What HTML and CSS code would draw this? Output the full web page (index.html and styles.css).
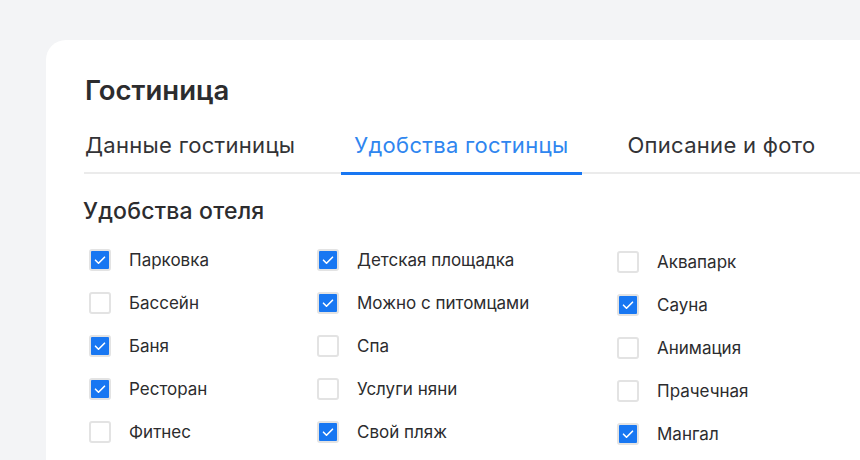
FILE: index.html
```html
<!DOCTYPE html>
<html lang="ru">
<head>
    <meta charset="UTF-8">
    <meta name="viewport" content="width=device-width, initial-scale=1.0">
    <title>Гостиница</title>
    <link rel="stylesheet" href="styles.css">
</head>
<body>
    <div class="card">
        <h1 class="card-title">Гостиница</h1>

        <div class="tabs">
            <div class="tab-list">
                <div class="tab">Данные гостиницы</div>
                <div class="tab tab-active">Удобства гостинцы</div>
                <div class="tab">Описание и фото</div>
            </div>
        </div>

        <h2 class="section-title">Удобства отеля</h2>

        <div class="amenities">
            <div class="amenity-col col-1">
                <label class="amenity"><span class="box checked"></span>Парковка</label>
                <label class="amenity"><span class="box"></span>Бассейн</label>
                <label class="amenity"><span class="box checked"></span>Баня</label>
                <label class="amenity"><span class="box checked"></span>Ресторан</label>
                <label class="amenity"><span class="box"></span>Фитнес</label>
            </div>
            <div class="amenity-col col-2">
                <label class="amenity"><span class="box checked"></span>Детская площадка</label>
                <label class="amenity"><span class="box checked"></span>Можно с питомцами</label>
                <label class="amenity"><span class="box"></span>Спа</label>
                <label class="amenity"><span class="box"></span>Услуги няни</label>
                <label class="amenity"><span class="box checked"></span>Свой пляж</label>
            </div>
            <div class="amenity-col col-3">
                <label class="amenity"><span class="box"></span>Аквапарк</label>
                <label class="amenity"><span class="box checked"></span>Сауна</label>
                <label class="amenity"><span class="box"></span>Анимация</label>
                <label class="amenity"><span class="box"></span>Прачечная</label>
                <label class="amenity"><span class="box checked"></span>Мангал</label>
            </div>
        </div>
    </div>
</body>
</html>
```

FILE: styles.css
```css
body {
    font-family: Inter, 'Noto Sans', sans-serif;
    background-color: #f3f4f6;
    color: #2c2c2e;
    margin: 0;
    padding: 40px 0 0 46px;
    overflow: hidden;
}

.card {
    background-color: #ffffff;
    border-radius: 20px 0 0 0;
    padding: 32px 0 40px 38px;
    min-height: 600px;
}

.card-title {
    font-size: 27.5px;
    font-weight: 600;
    line-height: 36px;
    margin: 0 0 22px 1px;
}

.tabs {
    border-bottom: 2px solid #ebebeb;
}

.tab-list {
    display: flex;
    gap: 32px;
    margin-left: -12px;
}

.tab {
    font-size: 22px;
    letter-spacing: 0.3px;
    line-height: 30px;
    padding: 0 14px 12px 13px;
    margin-bottom: -3px;
    border-bottom: 3px solid transparent;
    color: #333336;
    white-space: nowrap;
}

.tab-active {
    color: #2f86ef;
    border-bottom-color: #1877f2;
}

.section-title {
    font-size: 23px;
    font-weight: 500;
    letter-spacing: 0.2px;
    line-height: 30px;
    margin: 22px 0 12px -1px;
}

.amenities {
    display: flex;
}

.amenity-col {
    display: flex;
    flex-direction: column;
}

.col-1 {
    width: 228px;
    margin-left: 5px;
}

.col-2 {
    width: 300px;
}

.col-3 {
    margin-top: 2px;
}

.amenity {
    display: flex;
    align-items: center;
    height: 43px;
    font-size: 17px;
    color: #2c2c2e;
}

.box {
    width: 22px;
    height: 22px;
    box-sizing: border-box;
    border: 2px solid #e3e3e3;
    border-radius: 3px;
    margin-right: 18px;
    background-color: #ffffff;
    flex-shrink: 0;
}

.box.checked {
    background-color: #1877f2;
    background-image: url("data:image/svg+xml,%3Csvg xmlns='http://www.w3.org/2000/svg' viewBox='0 0 18 18'%3E%3Cpath d='M4.5 9.2l3 3 6-6' fill='none' stroke='%23fff' stroke-width='1.6' stroke-linecap='round' stroke-linejoin='round'/%3E%3C/svg%3E");
    background-size: 18px 18px;
    background-repeat: no-repeat;
    background-position: center;
}
```
